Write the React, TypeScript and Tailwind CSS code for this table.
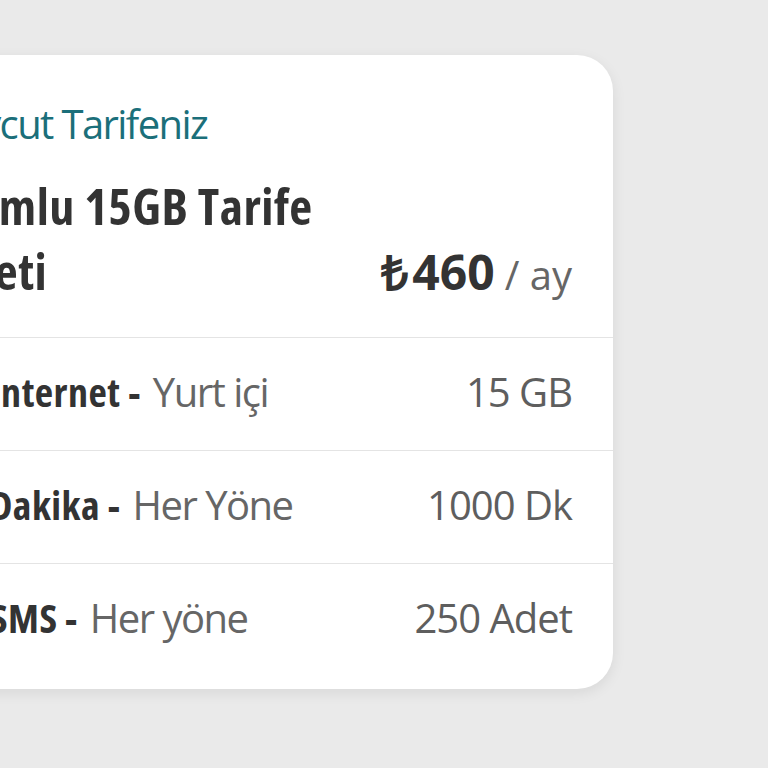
const rows = [
  { label: "İnternet", detail: "Yurt içi", value: "15 GB" },
  { label: "Dakika", detail: "Her Yöne", value: "1000 Dk" },
  { label: "SMS", detail: "Her yöne", value: "250 Adet" },
];

export default function App() {
  return (
    <div className="min-h-screen w-full overflow-hidden bg-[#eaeaea] pt-[55px] font-['Open_Sans',sans-serif]">
      <div className="ml-[-100px] w-[713px] rounded-[36px] bg-white pb-[13px] shadow-[0_4px_14px_rgba(0,0,0,0.08)]">
        <div className="pl-[26px] pr-[41px] pt-[44px] pb-[33px]">
          <p className="text-[40px] leading-[50px] tracking-[-1.6px] text-[#1b6f7a]">Mevcut Tarifeniz</p>
          <div className="mt-[25px] ml-[-4px] flex items-end justify-between">
            <h2 className="w-[420px] text-[50px] leading-[65px] font-bold font-stretch-condensed tracking-[0.5px] text-[#333333]">
              Uyumlu 15GB Tarife Paketi
            </h2>
            <div className="shrink-0 whitespace-nowrap text-[48px] leading-[65px]">
              <span className="mr-[4px] font-bold text-[#333333]">₺</span>
              <span className="font-bold text-[#333333]">460</span>
              <span className="ml-[10px] text-[40px] leading-none text-[#666666]">/ ay</span>
            </div>
          </div>
        </div>
        {rows.map((row) => (
          <div
            key={row.label}
            className="flex items-center justify-between border-t border-[#e4e4e4] pl-[90px] pr-[41px] pt-[30px] pb-[34px] text-[40px] leading-[48px]"
          >
            <p className="whitespace-nowrap">
              <span className="font-bold font-stretch-condensed tracking-[0.5px] text-[#333333]">{row.label} -</span>
              <span className="ml-[12px] tracking-[-1.5px] text-[#666666]">{row.detail}</span>
            </p>
            <p className="whitespace-nowrap tracking-[-1px] text-[#5e5e5e]">{row.value}</p>
          </div>
        ))}
      </div>
    </div>
  );
}
